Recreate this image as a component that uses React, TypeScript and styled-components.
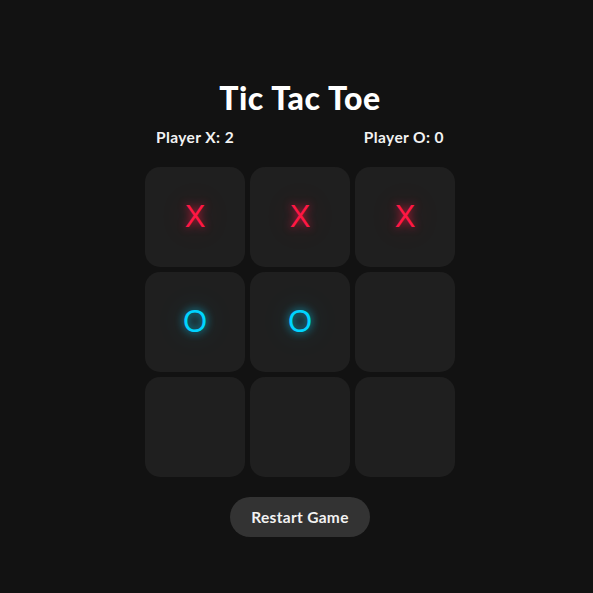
import React, { useState } from 'react';
import styled, { createGlobalStyle } from 'styled-components';

const GlobalStyle = createGlobalStyle`
    html, body {
        margin: 0;
        padding: 0;
        background-color: #121212;
    }
    body {
        font-family: "Lato", "Noto Sans", sans-serif;
        color: #ffffff;
    }
`

const MainBox = styled.div`
    display: flex;
    flex-direction: column;
    align-items: center;
    width: 100%;
    min-height: 593px;
    padding: 80px 0 0 7px;
    box-sizing: border-box;
`

const Title = styled.h1`
    margin: 0;
    font-size: 32px;
    font-weight: 900;
    line-height: 36px;
    letter-spacing: 0.6px;
    color: #ffffff;
`

const ScoreRow = styled.div`
    display: flex;
    justify-content: space-between;
    width: 288px;
    margin-top: 12px;
    font-size: 15.5px;
    font-weight: 700;
    line-height: 18px;
    letter-spacing: 0.4px;
    color: #f2f2f2;
`

const Board = styled.div`
    display: grid;
    grid-template-columns: repeat(3, 100px);
    grid-template-rows: repeat(3, 100px);
    gap: 5px;
    margin-top: 21px;
`

const Cell = styled.div<{ $mark: string }>`
    display: flex;
    align-items: center;
    justify-content: center;
    background-color: #1f1f1f;
    border-radius: 15px;
    font-family: "Liberation Sans", Arial, sans-serif;
    font-size: 31px;
    cursor: pointer;
    color: ${p => (p.$mark === 'X' ? '#ff1744' : '#00d4ff')};
    text-shadow: ${p =>
        p.$mark === 'X'
            ? '0 0 8px rgba(255, 23, 68, 0.85), 0 0 30px rgba(255, 23, 68, 0.3)'
            : '0 0 8px rgba(0, 212, 255, 0.85), 0 0 30px rgba(0, 212, 255, 0.3)'};
`

const RestartButton = styled.button`
    margin-top: 20px;
    width: 140px;
    height: 40px;
    border: none;
    border-radius: 20px;
    background-color: #333333;
    color: #f2f2f2;
    font-family: "Lato", "Noto Sans", sans-serif;
    font-size: 15.5px;
    font-weight: 700;
    letter-spacing: 0.3px;
    cursor: pointer;
`

const App: React.FC = () => {
    const [board] = useState<string[]>(['X', 'X', 'X', 'O', 'O', '', '', '', '']);

    return (
        <>
            <GlobalStyle />
            <MainBox>
                <Title>Tic Tac Toe</Title>
                <ScoreRow>
                    <span>Player X: 2</span>
                    <span>Player O: 0</span>
                </ScoreRow>
                <Board>
                    {board.map((mark, i) => (
                        <Cell key={i} $mark={mark}>{mark}</Cell>
                    ))}
                </Board>
                <RestartButton>Restart Game</RestartButton>
            </MainBox>
        </>
    );
}

export default App;
